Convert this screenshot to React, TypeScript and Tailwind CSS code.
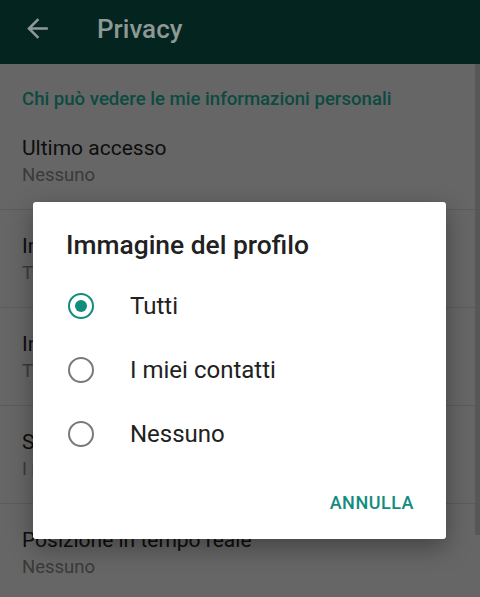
import React from 'react';

interface PrivacyItem {
  title: string;
  value: string;
}

const items: PrivacyItem[] = [
  { title: 'Ultimo accesso', value: 'Nessuno' },
  { title: 'Immagine del profilo', value: 'Tutti' },
  { title: 'Info', value: 'Tutti' },
  { title: 'Stato', value: 'I miei contatti' },
  { title: 'Posizione in tempo reale', value: 'Nessuno' },
];

const options = ['Tutti', 'I miei contatti', 'Nessuno'];

const Radio: React.FC<{ checked: boolean }> = ({ checked }) => (
  <span
    className={
      checked
        ? 'flex items-center justify-center w-[26px] h-[26px] rounded-full border-[2.5px] border-[#128c7e]'
        : 'flex items-center justify-center w-[26px] h-[26px] rounded-full border-[2.5px] border-[#7a7a7a]'
    }
  >
    {checked && <span className="w-[12px] h-[12px] rounded-full bg-[#128c7e]" />}
  </span>
);

export default function App() {
  const selected = 'Tutti';

  return (
    <div className="relative w-[480px] h-[597px] overflow-hidden bg-[#666666] font-['Roboto',sans-serif]">
      {/* Toolbar (dimmed behind the dialog) */}
      <header className="h-16 bg-[#03241f] flex items-center pb-[7px]">
        <svg className="ml-[22px] w-[31px] h-[31px]" viewBox="0 0 24 24" fill="#8e9895" aria-hidden="true">
          <path d="M20 11H7.83l5.59-5.59L12 4l-8 8 8 8 1.41-1.41L7.83 13H20v-2z" />
        </svg>
        <h1 className="ml-[44px] text-[26px] font-medium text-[#8e9895] leading-8">Privacy</h1>
      </header>

      {/* Settings list */}
      <div className="pl-[22px]">
        <p className="pt-[23px] pb-[1px] text-[18.6px] font-medium leading-6 text-[#0c4a42]">
          Chi può vedere le mie informazioni personali
        </p>
        {items.map((item) => (
          <div key={item.title} className="-ml-[22px] pl-[22px] h-[98px] pt-[22px] border-b border-[#5b5b5b]">
            <div className="text-[21px] leading-7 text-[#0e0e0e]">{item.title}</div>
            <div className="text-[18.5px] leading-[26px] text-[#3a3a3a]">{item.value}</div>
          </div>
        ))}
      </div>

      {/* Scroll indicator */}
      <div className="absolute right-0 top-16 w-[5px] h-[471px] bg-[#575757]" />

      {/* Dialog */}
      <div className="absolute left-[33px] top-[202px] w-[413px] h-[337px] bg-white rounded-[3px] shadow-[0_8px_24px_rgba(0,0,0,0.35)] flex flex-col">
        <h2 className="pt-[27px] pl-[33px] text-[26.4px] font-medium leading-8 text-[#212121]">
          Immagine del profilo
        </h2>
        <div className="mt-[13px] flex flex-col">
          {options.map((opt) => (
            <div key={opt} className="h-16 flex items-center pl-[35px] gap-[36px]">
              <Radio checked={opt === selected} />
              <span className="text-[24px] text-[#212121]">{opt}</span>
            </div>
          ))}
        </div>
        <div className="mt-auto mb-[24px] pr-[32px] flex justify-end">
          <button className="text-[18px] font-medium tracking-[0.5px] text-[#128c7e] leading-6">ANNULLA</button>
        </div>
      </div>
    </div>
  );
}
